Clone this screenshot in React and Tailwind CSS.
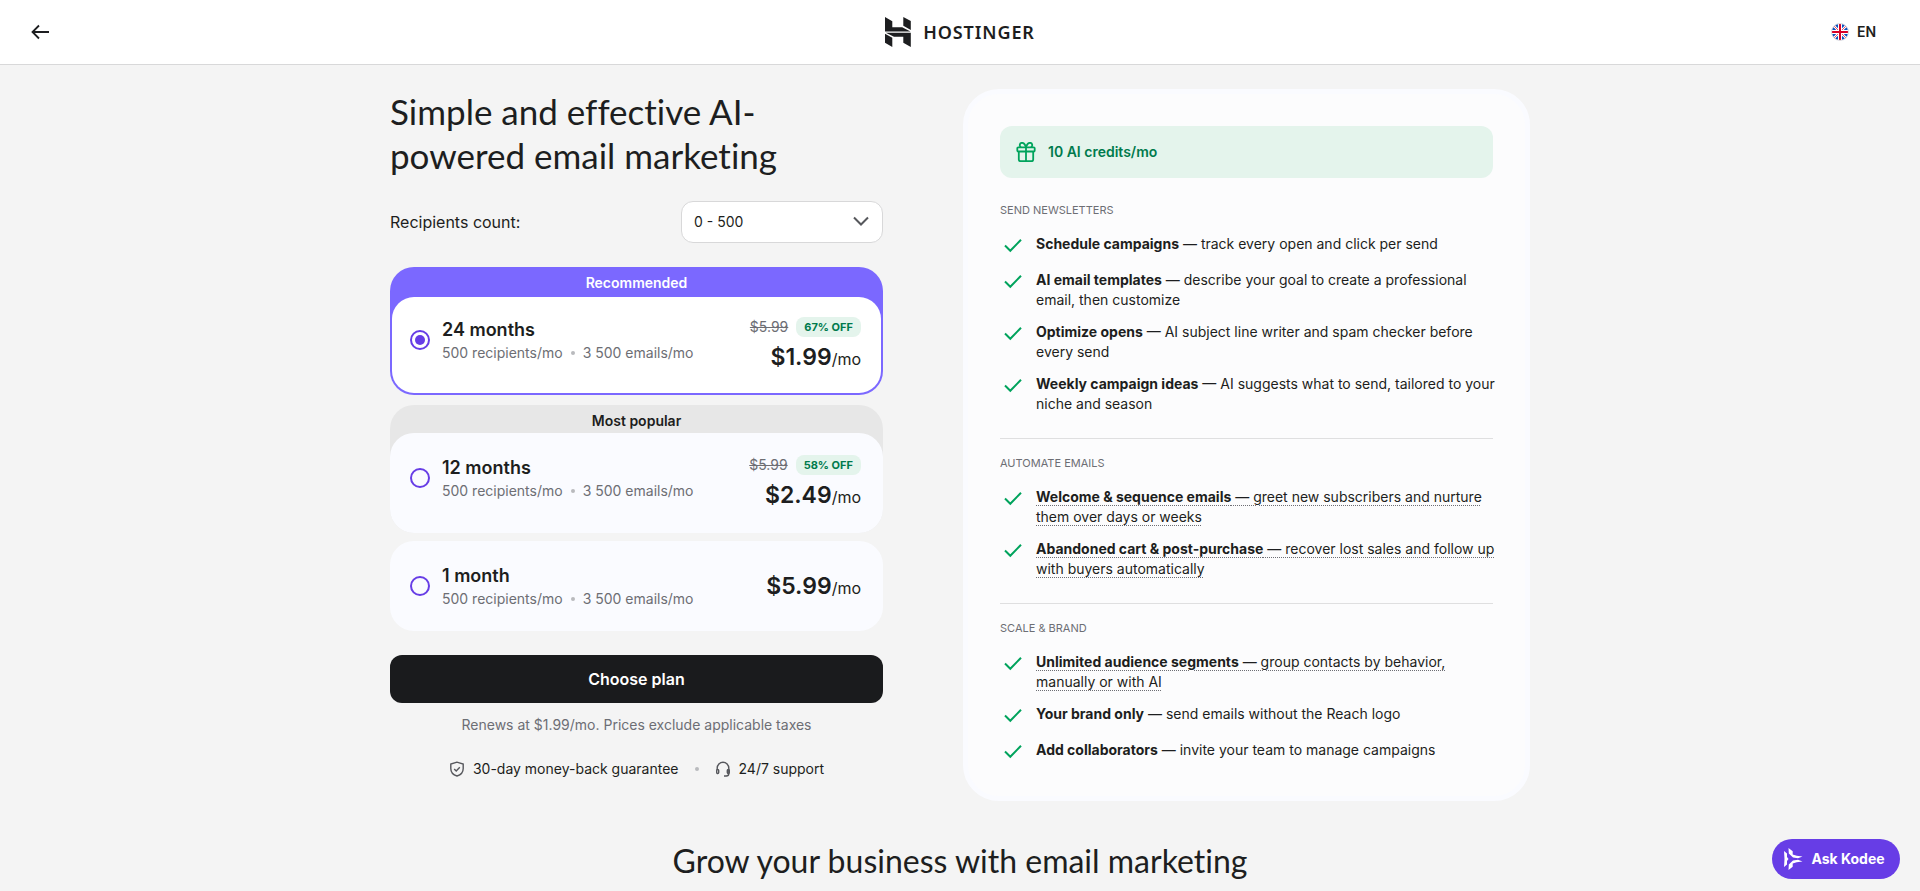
import React, { useState } from "react";

const plans = [
  { id: "24", title: "24 months", price: "$1.99", oldPrice: "$5.99", discount: "67% OFF", tag: "Recommended" },
  { id: "12", title: "12 months", price: "$2.49", oldPrice: "$5.99", discount: "58% OFF", tag: "Most popular" },
  { id: "1", title: "1 month", price: "$5.99" },
];

const features = [
  {
    title: "SEND NEWSLETTERS",
    items: [
      { name: "Schedule campaigns", text: "track every open and click per send" },
      { name: "AI email templates", text: "describe your goal to create a professional email, then customize" },
      { name: "Optimize opens", text: "AI subject line writer and spam checker before every send" },
      { name: "Weekly campaign ideas", text: "AI suggests what to send, tailored to your niche and season" },
    ],
  },
  {
    title: "AUTOMATE EMAILS",
    items: [
      { name: "Welcome & sequence emails", text: "greet new subscribers and nurture them over days or weeks", hint: true },
      { name: "Abandoned cart & post-purchase", text: "recover lost sales and follow up with buyers automatically", hint: true },
    ],
  },
  {
    title: "SCALE & BRAND",
    items: [
      { name: "Unlimited audience segments", text: "group contacts by behavior, manually or with AI", hint: true },
      { name: "Your brand only", text: "send emails without the Reach logo" },
      { name: "Add collaborators", text: "invite your team to manage campaigns" },
    ],
  },
];

const Header = () => (
  <header className="flex h-[65px] items-center justify-between border-b border-[#d8d8d9] bg-white px-7">
    <div className="flex flex-1">
      <button type="button" aria-label="Back" className="flex size-6 items-center justify-center">
        <svg width="24" height="24" viewBox="0 0 24 24" fill="none" stroke="#1d1e20" strokeWidth="1.8">
          <path d="M21 12H4.5M11 5.5L4.5 12l6.500 6.500" />
        </svg>
      </button>
    </div>
    <a href="#home" className="flex items-center gap-3 text-[#1d1e20]">
      <svg width="26" height="30" viewBox="0 0 26 30" fill="currentColor">
        <path d="M0 0l7.300 4.200v6l9.900 0L25.500 14.500H0zM18.300 8.800V0L25.800 4v9z" />
        <path d="M0 16.800l7.300 4v9.200L0 25.800zM.8 15.800H25.800V30l-7.500-4.200v-6.100H9z" />
      </svg>
      <span className="font-['Noto_Sans',sans-serif] text-lg leading-6 font-semibold tracking-wider">HOSTINGER</span>
    </a>
    <div className="flex flex-1 justify-end">
      <button type="button" className="mr-4 flex items-center gap-2 text-sm font-semibold">
        <svg width="18" height="18" viewBox="0 0 18 18">
          <clipPath id="flag">
            <circle cx="9" cy="9" r="8.500" />
          </clipPath>
          <g clipPath="url(#flag)">
            <rect width="18" height="18" fill="#0b50bd" />
            <path d="M0 0l18 18M18 0L0 18" stroke="#fff" strokeWidth="2.400" />
            <path d="M0 0l18 18M18 0L0 18" stroke="#e8546a" strokeWidth="1" />
            <path d="M9 0v18M0 9h18" stroke="#fff" strokeWidth="4" />
            <path d="M9 0v18M0 9h18" stroke="#d80027" strokeWidth="2" />
          </g>
          <circle cx="9" cy="9" r="8.500" fill="none" stroke="#e4e4e6" />
        </svg>
        EN
      </button>
    </div>
  </header>
);

const PlanCard = ({ plan, selected, onSelect }) => {
  const content = (
    <label
      htmlFor={`plan-${plan.id}`}
      className={
        selected
          ? "flex cursor-pointer items-start justify-between rounded-[22px] bg-white pt-5 pr-5 pb-5 pl-[18px]"
          : "flex cursor-pointer items-start justify-between rounded-3xl bg-[#fafbff] py-[22px] pr-[22px] pl-5"
      }
    >
      <span className="flex items-center gap-3">
        <input
          id={`plan-${plan.id}`}
          type="radio"
          name="plan"
          checked={selected}
          onChange={onSelect}
          className="size-5 appearance-none rounded-full border-2 border-[#673de6] bg-clip-content p-[3px] checked:bg-[#673de6]"
        />
        <span>
          <span className="block text-lg leading-[26px] font-semibold">{plan.title}</span>
          <span className="flex items-center gap-2 text-sm leading-5 text-[#6d6e74]">
            500 recipients/mo
            <span className="size-1 rounded-full bg-[#b9babd]"></span>
            3 500 emails/mo
          </span>
        </span>
      </span>
      <span className={plan.discount ? "flex flex-col items-end gap-1" : "flex flex-col items-end self-center"}>
        {plan.discount && (
          <span className="flex items-center gap-2">
            <s className="text-sm leading-5 text-[#6d6e74]">{plan.oldPrice}</s>
            <span className="rounded-lg bg-[#e4f4ec] px-2 text-[11px] leading-5 font-bold text-[#007a4d]">
              {plan.discount}
            </span>
          </span>
        )}
        <span className="block leading-4">
          <strong className="text-[23px] leading-8 font-semibold">{plan.price}</strong>/mo
        </span>
      </span>
    </label>
  );

  if (!plan.tag) return content;

  return (
    <div className={selected ? "mb-0.5 rounded-3xl bg-[#7b68ff] p-0.5" : "rounded-3xl bg-[#e7e7e7]"}>
      <p
        className={
          selected
            ? "h-7 text-center text-sm leading-7 font-semibold text-white"
            : "h-7 pt-1 text-center text-sm leading-6 font-semibold"
        }
      >
        {plan.tag}
      </p>
      {content}
    </div>
  );
};

const FeatureList = () => (
  <section className="w-[567px] rounded-[36px] border-[5px] border-[#fafbff] bg-[#fcfcfd] p-8">
    <div className="flex items-center gap-3 rounded-xl bg-[#e4f4ec] p-4 text-sm leading-5 font-semibold text-[#007a4d]">
      <svg width="20" height="20" viewBox="0 0 20 20" fill="none" stroke="#00a35c" strokeWidth="1.800">
        <rect x="1.300" y="5.300" width="17.400" height="4.200" rx="1" />
        <path d="M2.800 9.500v8a1.700 1.700 0 0 0 1.700 1.700h11a1.700 1.700 0 0 0 1.700-1.700v-8M10 5.300v13.900" />
        <path d="M10 5.300C9 2 7.500.8 6 .8 3.500.8 3 4 5 5.300M10 5.300C11 2 12.500.8 14 .8 16.500.8 17 4 15 5.300" />
      </svg>
      10 AI credits/mo
    </div>
    {features.map((group, index) => (
      <div key={group.title} className={index === 0 ? "pt-6" : "mt-6 border-t border-[#dfdfe0] pt-4"}>
        <h3 className="text-[11px] leading-4 text-[#6d6e74]">{group.title}</h3>
        <ul className="mt-4 -mr-3 flex flex-col gap-3">
          {group.items.map((item) => (
            <li key={item.name} className="flex items-start gap-3">
              <svg className="shrink-0" width="24" height="24" viewBox="0 0 24 24" fill="none" stroke="#00a35c" strokeWidth="2">
                <path d="M5 11.500l5.300 5.300L21 5.800" />
              </svg>
              <p
                className={
                  item.hint
                    ? "text-sm leading-5 underline decoration-[#6d6e74] decoration-dotted decoration-1 underline-offset-3"
                    : "text-sm leading-5"
                }
              >
                <b className="font-bold">{item.name}</b> — {item.text}
              </p>
            </li>
          ))}
        </ul>
      </div>
    ))}
  </section>
);

const App = () => {
  const [selected, setSelected] = useState("24");

  return (
    <div className="min-h-screen bg-[#f4f4f4] font-['Inter',sans-serif] text-[#1d1e20]">
      <Header />

      <main className="mx-auto max-w-[1140px] pt-6">
        <div className="flex items-start gap-20">
          {/* Plan picker */}
          <section className="flex-1">
            <h1 className="font-['Lato',sans-serif] text-[35px] leading-11 [font-variant-ligatures:none]">
              Simple and effective AI-
              <br />
              powered email marketing
            </h1>
            <div className="mt-6 flex items-center justify-between">
              <label htmlFor="recipients">Recipients count:</label>
              <div className="relative">
                <select
                  id="recipients"
                  className="block h-[42px] w-[202px] appearance-none rounded-xl border border-[#d8d8d9] bg-white px-3 text-sm"
                >
                  <option>0 - 500</option>
                </select>
                <svg
                  className="pointer-events-none absolute top-2 right-2.5"
                  width="24"
                  height="24"
                  viewBox="0 0 24 24"
                  fill="none"
                  stroke="#56575c"
                  strokeWidth="2"
                >
                  <path d="M5 8.500l7 7 7-7" />
                </svg>
              </div>
            </div>

            <div className="mt-6 flex flex-col gap-2">
              {plans.map((plan) => (
                <PlanCard
                  key={plan.id}
                  plan={plan}
                  selected={selected === plan.id}
                  onSelect={() => setSelected(plan.id)}
                />
              ))}
            </div>

            <button type="button" className="mt-6 h-12 w-full rounded-xl bg-[#1a1b1d] text-base font-semibold text-white">
              Choose plan
            </button>
            <p className="mt-3 text-center text-sm leading-5 text-[#6d6e74]">
              Renews at $1.99/mo. Prices exclude applicable taxes
            </p>
            <div className="mt-6 flex items-center justify-center gap-4 text-sm leading-5">
              <span className="flex items-center gap-2">
                <svg width="16" height="16" viewBox="0 0 16 16" fill="none" stroke="#56575c" strokeWidth="1.400">
                  <path d="M8 1.200L1.800 3v4.500C1.800 11 4.500 14 8 15c3.500-1 6.200-4 6.200-7.500V3z" />
                  <path d="M5.200 8l2 2 3.600-3.800" />
                </svg>
                30-day money-back guarantee
              </span>
              <span className="size-1 rounded-full bg-[#b9babd]"></span>
              <span className="flex items-center gap-2">
                <svg width="16" height="16" viewBox="0 0 16 16" fill="none" stroke="#56575c" strokeWidth="1.400">
                  <path d="M2.200 9V7a5.800 5.800 0 0 1 11.600 0v5.500a2.500 2.500 0 0 1-2.500 2.500H9" />
                  <rect x="1.700" y="8.500" width="2" height="4" rx="1" />
                  <rect x="12.300" y="8.500" width="2" height="4" rx="1" />
                </svg>
                24/7 support
              </span>
            </div>
          </section>

          <FeatureList />
        </div>

        <h2 className="mt-10 text-center font-['Lato',sans-serif] text-[32px] leading-10 [font-variant-ligatures:none]">
          Grow your business with email marketing
        </h2>
      </main>

      <button
        type="button"
        className="fixed right-5 bottom-3 flex h-10 w-32 items-center justify-center gap-2 rounded-full bg-[#673de6] pr-1 text-sm font-bold text-white"
      >
        <svg width="20" height="22" viewBox="0 0 20 22" fill="currentColor">
          <path d="M1 3l3 2.500v3.500L5.500 11 4 13v3.500L1 19l.5-8z" />
          <path d="M5.500 0l4.200 3.200v3.300l4 1.300 5.800.7-4.500 1.800-5-.8-4.200-4z" />
          <path d="M5.500 22l4.200-3.200v-3.300l4-1.300 5.800-.7-4.500-1.800-5 .8-4.200 4z" />
        </svg>
        Ask Kodee
      </button>
    </div>
  );
};

export default App;
